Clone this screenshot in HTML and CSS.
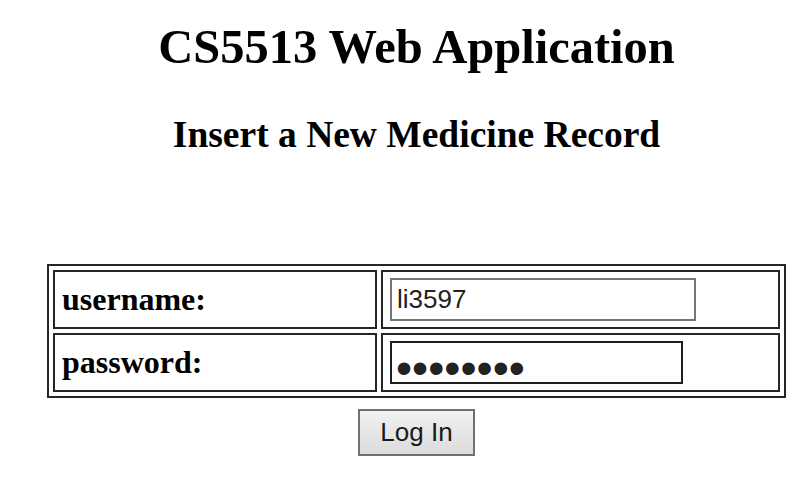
FILE: index.html
```
<!DOCTYPE html>
<html>
<head>
<meta charset="utf-8">
<title>CS5513 Web Application</title>
<link rel="stylesheet" href="styles.css">
</head>
<body>
<div class="page">
  <h1 class="title">CS5513 Web Application</h1>
  <h2 class="subtitle">Insert a New Medicine Record</h2>
  <form class="login">
    <table class="grid">
      <tr>
        <td class="label">username:</td>
        <td class="field"><input class="text-in" type="text" value="li3597"></td>
      </tr>
      <tr>
        <td class="label">password:</td>
        <td class="field"><input class="pass-in" type="password" value="li359700"></td>
      </tr>
    </table>
    <div class="actions"><button class="btn" type="button">Log In</button></div>
  </form>
</div>
</body>
</html>
```
FILE: styles.css
```
html, body {
  margin: 0;
  padding: 0;
  background: #fff;
}
.page {
  padding: 19px 0 0 21px;
  font-family: "Liberation Serif", "Times New Roman", serif;
  color: #000;
  text-align: center;
}
.title {
  margin: 0;
  font-size: 48.5px;
  line-height: 56px;
  font-weight: bold;
}
.subtitle {
  margin: 38px 0 0;
  font-size: 37.5px;
  line-height: 44px;
  font-weight: bold;
}
.login {
  margin: 107px 0 0;
}
.grid {
  margin: 0 auto;
  width: 739px;
  border: 2px solid #262626;
  border-spacing: 4px;
  text-align: left;
}
.grid td {
  border: 2px solid #262626;
  height: 55px;
  padding: 0 7px;
  vertical-align: middle;
}
.label {
  width: 306px;
  font-size: 32px;
  font-weight: bold;
}
.text-in, .pass-in {
  display: block;
  margin: 0;
  box-sizing: border-box;
  height: 43px;
  font-family: "Liberation Sans", Arial, sans-serif;
  color: #222;
  background: #fff;
  outline: none;
}
.text-in {
  width: 306px;
  padding: 0 5px;
  font-size: 26px;
  border: 2px solid #767676;
}
.pass-in {
  width: 293px;
  padding: 10px 4px 0;
  font-size: 46px;
  border: 2px solid #1e1e1e;
}
.actions {
  margin-top: 11px;
}
.btn {
  width: 117px;
  height: 47px;
  margin: 0;
  padding: 0;
  border: 2px solid #707070;
  background: linear-gradient(#f1f1f1, #dcdcdc);
  font-family: "Liberation Sans", Arial, sans-serif;
  font-size: 26px;
  color: #1a1a1a;
}
```
